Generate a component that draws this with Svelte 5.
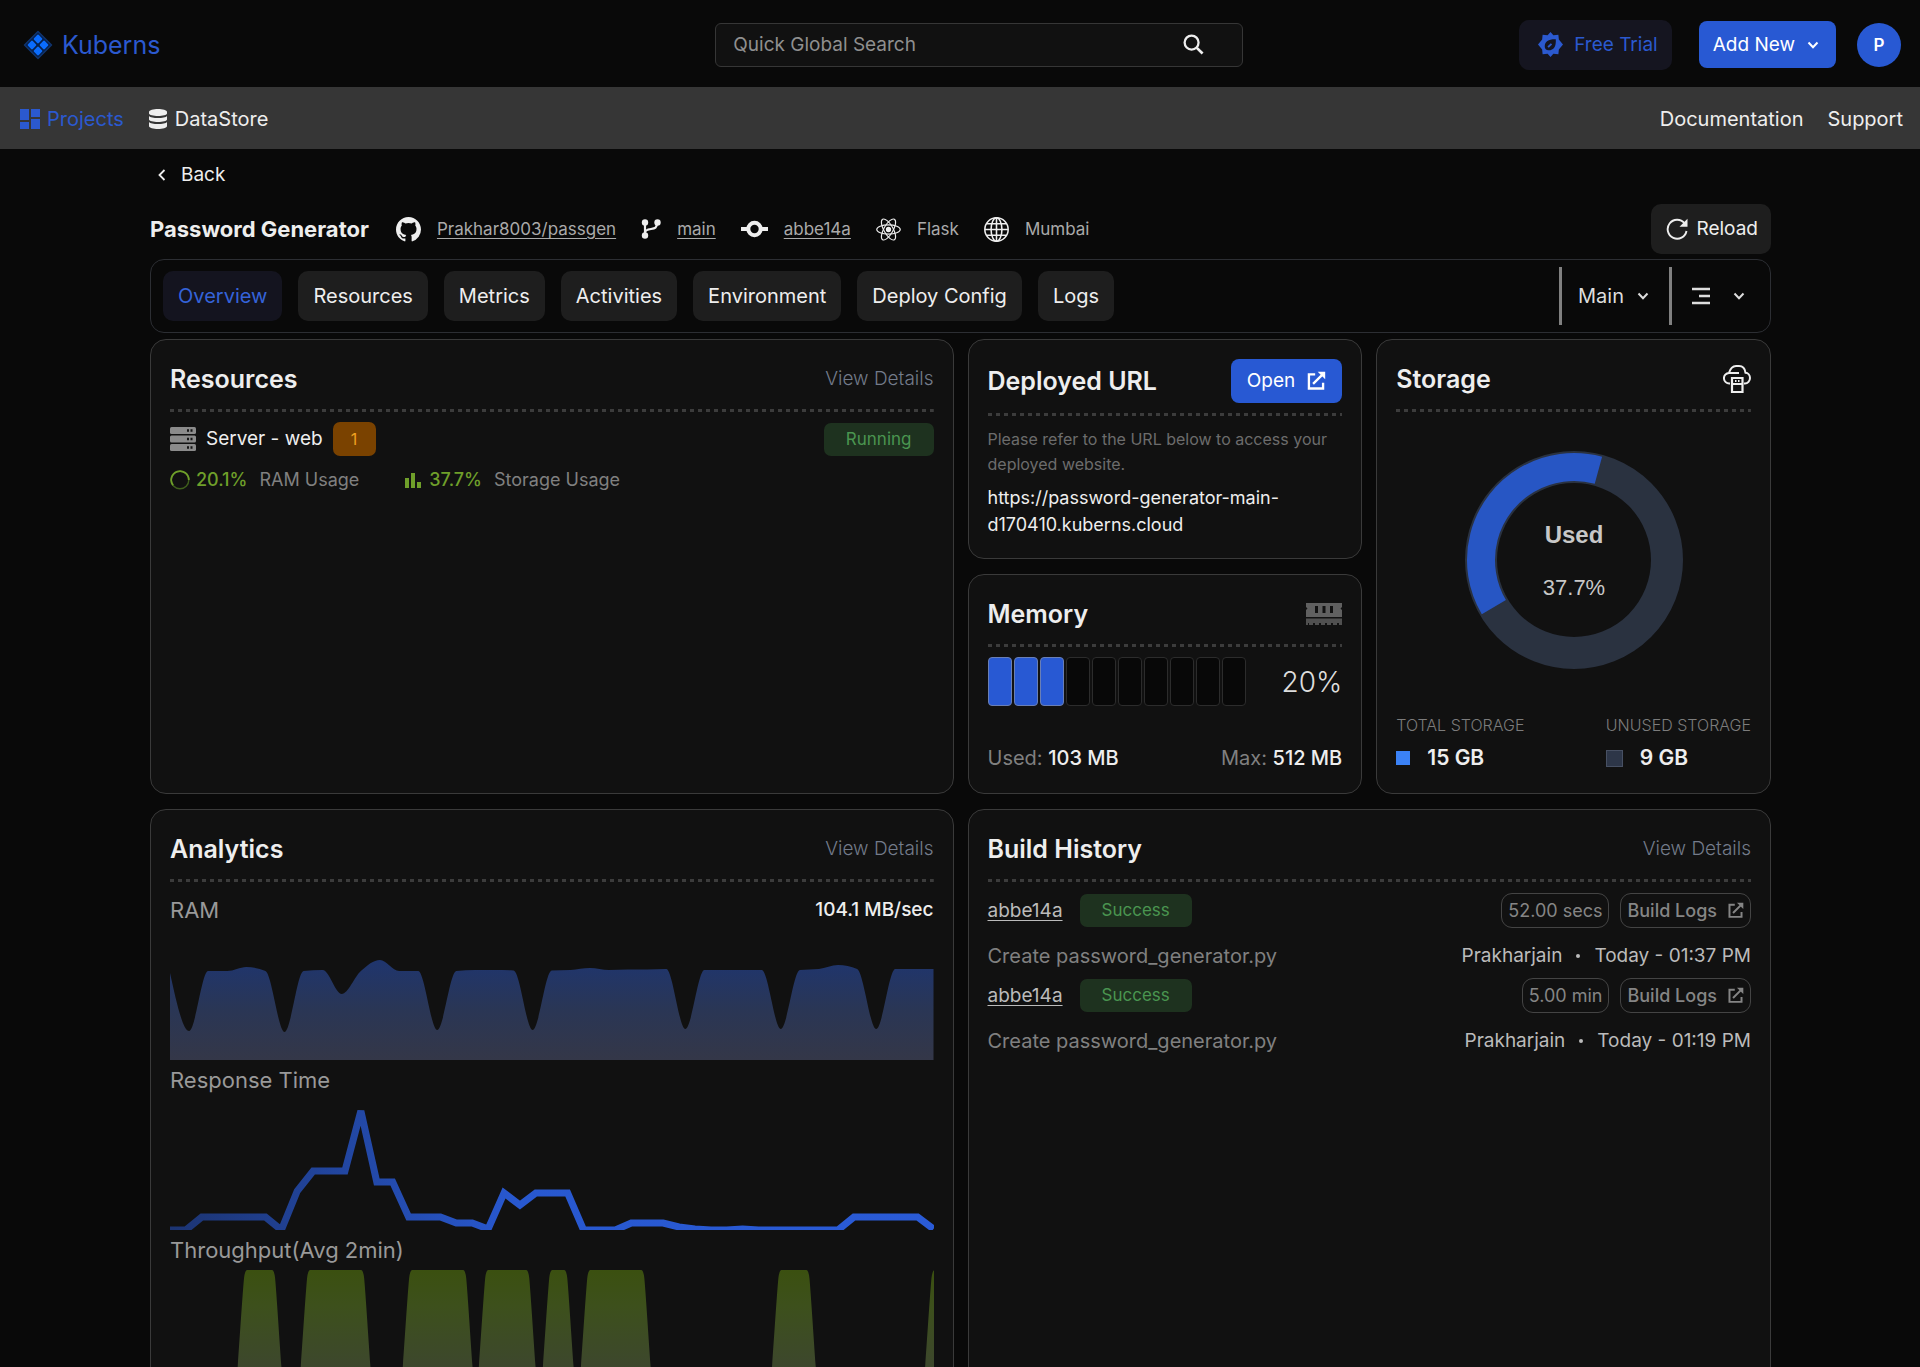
<script lang="ts">
	type Build = { commit: string; duration: string; message: string; author: string; date: string };

	const tabs = ['Overview', 'Resources', 'Metrics', 'Activities', 'Environment', 'Deploy Config', 'Logs'];
	let activeTab = 'Overview';
	let search = '';

	const builds: Build[] = [
		{ commit: 'abbe14a', duration: '52.00 secs', message: 'Create password_generator.py', author: 'Prakharjain', date: 'Today - 01:37 PM' },
		{ commit: 'abbe14a', duration: '5.00 min', message: 'Create password_generator.py', author: 'Prakharjain', date: 'Today - 01:19 PM' }
	];

	const memoryCells = Array.from({ length: 10 }, (_, i) => i < 3);

	const chartWidth = 763;

	// chart values are measured down from the top edge
	const ram = [
		13, 71, 11, 11, 7, 11, 72, 11, 10, 34, 11, 0, 11, 11, 70, 11, 10, 10, 10.5, 70, 10.5, 10, 8, 10, 9.5,
		9.5, 9, 69, 10, 10, 10, 10, 69, 10, 9, 5, 9, 69, 9, 9, 9
	];
	const response = [
		120, 120, 107, 107, 107, 107, 107, 120, 81, 61, 61, 61, 1, 72, 72, 107, 107, 107, 113, 113, 119, 83,
		95, 83, 83, 83, 120, 120, 120, 113, 113, 113, 117, 119, 120, 120, 119, 120, 120, 120, 120, 120, 120,
		107, 107, 107, 107, 107, 119
	];
	// left and right edge of every burst at full height
	const throughput = [
		[76, 103],
		[139, 192],
		[241, 294],
		[317, 357],
		[381, 395],
		[419, 472],
		[610, 637],
		[763, 790]
	];

	function smoothLine(values: number[]): string {
		const step = chartWidth / (values.length - 1);
		const slopes = values.map((v, i) => {
			if (i === 0 || i === values.length - 1) return 0;
			const before = (v - values[i - 1]) / step;
			const after = (values[i + 1] - v) / step;
			if (before * after <= 0) return 0;
			return Math.sign(before) * Math.min(Math.abs(before), Math.abs(after), Math.abs(before + after) / 4) * 2;
		});
		slopes[0] = (1.5 * (values[1] - values[0])) / step;

		let d = `M0 ${values[0]}`;
		for (let i = 1; i < values.length; i++) {
			const x0 = (i - 1) * step;
			const x1 = i * step;
			const third = step / 3;
			d += ` C${x0 + third} ${values[i - 1] + slopes[i - 1] * third} ${x1 - third} ${values[i] - slopes[i] * third} ${x1} ${values[i]}`;
		}
		return d;
	}

	function straightLine(values: number[]): string {
		const step = chartWidth / (values.length - 1);
		return values.map((v, i) => `${i * step},${v}`).join(' ');
	}

	function burst([left, right]: number[]): string {
		return `M${left - 10} 120 C${left - 7} 80 ${left - 4} 30 ${left - 2} 8 Q${left - 1} 0 ${left + 1} 0 H${right - 1} Q${right + 1} 0 ${right + 2} 8 C${right + 4} 30 ${right + 7} 80 ${right + 10} 120 Z`;
	}

	const ramArea = `${smoothLine(ram)} V100 H0 Z`;
</script>

{#snippet chevron()}
	<svg class="chevron" viewBox="0 0 12 12" aria-hidden="true">
		<path d="M1.500 3.500 6 8.200l4.500-4.700" fill="none" stroke="currentColor" stroke-width="2" />
	</svg>
{/snippet}

{#snippet external()}
	<svg class="external" viewBox="0 0 24 24" aria-hidden="true">
		<path d="M11 4H3.500v17h17v-7M8.500 15.500 20 4" fill="none" stroke="currentColor" stroke-width="2.800" />
		<path d="M14 1h9v9l-3-3-3-3Z" fill="currentColor" />
	</svg>
{/snippet}

<div class="app">
	<header class="topbar">
		<a class="brand" href="/">
			<svg viewBox="0 0 30 30" aria-hidden="true">
				<path d="M15 1.500 28.500 15 15 28.500 1.500 15Z" fill="#06204d" stroke="#10346e" stroke-width="1.500" stroke-linejoin="round" />
				<g fill="#0a6cff">
					<rect x="-3.400" y="-3.400" width="6.800" height="6.800" rx="1.200" transform="translate(15 9) rotate(45)" />
					<rect x="-3.400" y="-3.400" width="6.800" height="6.800" rx="1.200" transform="translate(9 15) rotate(45)" />
					<rect x="-3.400" y="-3.400" width="6.800" height="6.800" rx="1.200" transform="translate(21 15) rotate(45)" />
					<rect x="-3.400" y="-3.400" width="6.800" height="6.800" rx="1.200" transform="translate(15 21) rotate(45)" />
				</g>
			</svg>
			Kuberns
		</a>

		<form class="search" role="search">
			<input type="search" aria-label="Search" placeholder="Quick Global Search" bind:value={search} />
			<button type="submit" aria-label="Search">
				<svg viewBox="0 0 22 22" aria-hidden="true">
					<circle cx="9" cy="9" r="7.300" fill="none" stroke="currentColor" stroke-width="2.400" />
					<path d="m14.500 14.500 6 6" stroke="currentColor" stroke-width="2.800" />
				</svg>
			</button>
		</form>

		<div class="account">
			<button class="trial">
				<svg viewBox="0 0 26 26" aria-hidden="true">
					<path
						fill="currentColor"
						fill-rule="evenodd"
						d="M13 0l3 3.300 5.200-.5.500 5L26 13l-4.300 5.200-.5 5-5.200-.5L13 26l-3-3.300-5.200.5-.5-5L0 13l4.300-5.200.5-5 5.200.5ZM18.500 7.500c-7-.3-11.500 2-11.500 7.500 0 2.500 1.500 4 4 4 5.500 0 8-4 7.500-11.500Z"
					/>
					<path d="M10.500 15.800 14 12.300" stroke="currentColor" stroke-width="2" />
				</svg>
				Free Trial
			</button>
			<button class="add">Add New {@render chevron()}</button>
			<button class="avatar" aria-label="Account">P</button>
		</div>
	</header>

	<nav class="subnav">
		<a class="current" href="/projects">
			<svg viewBox="0 0 20 20" fill="currentColor" aria-hidden="true">
				<path d="M0 0h9v11H0zM11 0h9v8h-9zM0 13h9v7H0zM11 10h9v10h-9z" />
			</svg>
			Projects
		</a>
		<a href="/datastore">
			<svg viewBox="0 0 18 20" fill="currentColor" aria-hidden="true">
				<path d="M0 3c0-4 18-4 18 0v1.500c0 3.300-18 3.300-18 0Z" />
				<path d="M0 7c2 2.800 16 2.800 18 0v3.500c0 3.300-18 3.300-18 0Z" />
				<path d="M0 13c2 2.800 16 2.800 18 0v4c0 4-18 4-18 0Z" />
			</svg>
			DataStore
		</a>
		<a class="push" href="/docs">Documentation</a>
		<a href="/support">Support</a>
	</nav>

	<main>
		<a class="back" href="/projects">
			<svg viewBox="0 0 12 12" aria-hidden="true">
				<path d="M8.500 1 3.500 6l5 5" fill="none" stroke="currentColor" stroke-width="1.800" />
			</svg>
			Back
		</a>

		<div class="project">
			<h1>Password Generator</h1>
			<ul>
				<li>
					<svg viewBox="0 0 16 16" fill="currentColor" aria-hidden="true">
						<path d="M8 0C3.580 0 0 3.580 0 8c0 3.540 2.290 6.530 5.470 7.590.4.070.55-.17.55-.38 0-.19-.010-.82-.010-1.490-2.010.37-2.530-.49-2.690-.94-.090-.23-.48-.94-.82-1.130-.28-.15-.68-.52-.010-.53.63-.010 1.080.58 1.230.82.72 1.210 1.870.87 2.330.66.070-.52.28-.87.51-1.070-1.780-.2-3.640-.89-3.640-3.950 0-.87.31-1.590.82-2.150-.080-.2-.36-1.020.080-2.120 0 0 .67-.21 2.200.82a7.640 7.640 0 0 1 4 0c1.530-1.040 2.200-.82 2.200-.82.44 1.100.16 1.920.080 2.120.51.56.82 1.270.82 2.150 0 3.070-1.870 3.750-3.650 3.950.29.25.54.73.54 1.480 0 1.070-.010 1.930-.010 2.200 0 .21.15.46.55.38A8.010 8.010 0 0 0 16 8c0-4.420-3.580-8-8-8Z" />
					</svg>
					<a href="/repo">Prakhar8003/passgen</a>
				</li>
				<li>
					<svg class="branch" viewBox="0 0 20 20" aria-hidden="true">
						<path d="M4 4v12M16 4c0 5-2 5.500-6 6-3.500.4-6 1-6 4" fill="none" stroke="currentColor" stroke-width="2.200" />
						<g fill="currentColor">
							<circle cx="4" cy="3.500" r="3.200" />
							<circle cx="4" cy="16.500" r="3.200" />
							<circle cx="16.500" cy="3.500" r="3.200" />
						</g>
					</svg>
					<a href="/branch">main</a>
				</li>
				<li>
					<svg class="commit" viewBox="0 0 27 24" fill="none" stroke="currentColor" stroke-width="4" aria-hidden="true">
						<circle cx="13.500" cy="12" r="6.200" />
						<path d="M0 12h7.500M19.500 12H27" />
					</svg>
					<a href="/commit">abbe14a</a>
				</li>
				<li>
					<svg viewBox="0 0 24 24" fill="none" stroke="currentColor" stroke-width="1.100" aria-hidden="true">
						<ellipse cx="12" cy="12" rx="11.300" ry="4.400" />
						<ellipse cx="12" cy="12" rx="11.300" ry="4.400" transform="rotate(60 12 12)" />
						<ellipse cx="12" cy="12" rx="11.300" ry="4.400" transform="rotate(120 12 12)" />
						<circle cx="12" cy="12" r="2" fill="currentColor" />
					</svg>
					<span>Flask</span>
				</li>
				<li>
					<svg viewBox="0 0 24 24" fill="none" stroke="currentColor" stroke-width="1.500" aria-hidden="true">
						<circle cx="12" cy="12" r="11.200" />
						<ellipse cx="12" cy="12" rx="5.200" ry="11.200" />
						<path d="M12 1v22M1 12h22M2.500 6.500h19M2.500 17.500h19" />
					</svg>
					<span>Mumbai</span>
				</li>
			</ul>
			<button class="reload">
				<svg viewBox="0 0 22 22" aria-hidden="true">
					<path d="M18.500 5.200A9.500 9.500 0 1 0 20.500 13" fill="none" stroke="currentColor" stroke-width="1.900" />
					<path d="M21.500.8v8h-8Z" fill="currentColor" />
				</svg>
				Reload
			</button>
		</div>

		<div class="tabs">
			{#each tabs as tab}
				<button class:active={tab === activeTab} on:click={() => (activeTab = tab)}>{tab}</button>
			{/each}
			<div class="env">
				<select aria-label="Environment">
					<option>Main</option>
				</select>
				{@render chevron()}
			</div>
			<button class="more" aria-label="More options">
				<svg viewBox="0 0 20 18" aria-hidden="true">
					<path d="M1 2h18M8 9h11M1 16h18" stroke="currentColor" stroke-width="2.600" />
				</svg>
				{@render chevron()}
			</button>
		</div>

		<div class="grid">
			<section class="card wide tall">
				<div class="card-head">
					<h2>Resources</h2>
					<a href="/resources">View Details</a>
				</div>
				<div class="server">
					<svg viewBox="0 0 26 24" aria-hidden="true">
						<g fill="#8b8b8b">
							<rect width="26" height="7" rx="1.500" />
							<rect y="8.500" width="26" height="7" rx="1.500" />
							<rect y="17" width="26" height="7" rx="1.500" />
						</g>
						<path d="M17 3.500h2m1.500 0h2M17 12h2m1.500 0h2M17 20.500h2m1.500 0h2" stroke="#151515" stroke-width="2.400" />
					</svg>
					<span>Server - web</span>
					<span class="count">1</span>
					<span class="status">Running</span>
				</div>
				<div class="usage">
					<svg viewBox="0 0 20 20" aria-hidden="true">
						<circle cx="10" cy="10" r="8.800" fill="none" stroke="#3f5f1c" stroke-width="1.400" />
						<path d="M3 15.300A8.800 8.800 0 1 1 18.800 10" fill="none" stroke="#6f9f2a" stroke-width="1.800" />
					</svg>
					<strong>20.1%</strong>
					<span class="first">RAM Usage</span>
					<svg viewBox="0 0 20 20" fill="#6f9f2a" aria-hidden="true">
						<path d="M2 8h4v10H2zM8 3h4v15H8zM14 12h4v6h-4z" />
					</svg>
					<strong>37.7%</strong>
					<span>Storage Usage</span>
				</div>
			</section>

			<section class="card">
				<div class="card-head">
					<h2>Deployed URL</h2>
					<button class="open">Open {@render external()}</button>
				</div>
				<p class="hint">Please refer to the URL below to access your deployed website.</p>
				<p class="url">https://password-generator-main-d170410.kuberns.cloud</p>
			</section>

			<section class="card tall">
				<div class="card-head">
					<h2>Storage</h2>
					<svg class="cloud" viewBox="0 0 28 28" fill="none" stroke="#eee" stroke-width="2" aria-hidden="true">
						<path d="M7 18.500H6.500a5.300 5.300 0 0 1-.5-10.600C7.500 3 10 1 13 1h3c3.500 0 6 2.700 6.500 6.800 2.500.2 4.500 2.500 4.500 5.200 0 3-2.300 5.500-5 5.500h-1M6 8h10" stroke-linejoin="round" />
						<path d="M9 13h10.500v14H9ZM9 19h10.500" stroke-width="2.200" />
						<path d="M12 16h1.500M15 16h1.500" />
					</svg>
				</div>
				<svg class="donut" viewBox="0 0 218 218" role="img" aria-label="Used 37.7%">
					<circle cx="109" cy="109" r="93" fill="none" stroke="#2a3240" stroke-width="32" />
					<circle
						cx="109"
						cy="109"
						r="93"
						fill="none"
						stroke="#2756c4"
						stroke-width="28"
						pathLength="100"
						stroke-dasharray="37.700 62.300"
						transform="rotate(149.500 109 109)"
					/>
					<text class="donut-title" x="109" y="92">Used</text>
					<text class="donut-value" x="109" y="144">37.7%</text>
				</svg>
				<dl class="legend">
					<div>
						<dt>TOTAL STORAGE</dt>
						<dd class="total">15 GB</dd>
					</div>
					<div>
						<dt>UNUSED STORAGE</dt>
						<dd class="unused">9 GB</dd>
					</div>
				</dl>
			</section>

			<section class="card">
				<div class="card-head">
					<h2>Memory</h2>
					<svg class="stick" viewBox="0 0 36 22" aria-hidden="true">
						<path fill="#606060" fill-rule="evenodd" d="M0 0h36v4l-1.500 1.500L36 7v7H0V7l1.500-1.500L0 4ZM9 3v7h3V3ZM16.500 3v7h3V3ZM24 3v7h3V3Z" />
						<path fill="#505050" d="M0 15.500h36V22h-3v-2h-2v2h-4v-2h-2v2h-4v-2h-2v2h-4v-2h-2v2H9v-2H7v2H3v-2H2v2H0Z" />
					</svg>
				</div>
				<div class="meter">
					<div class="cells">
						{#each memoryCells as filled}
							<span class:filled></span>
						{/each}
					</div>
					<strong>20%</strong>
				</div>
				<div class="totals">
					<span>Used: <b>103 MB</b></span>
					<span>Max: <b>512 MB</b></span>
				</div>
			</section>

			<section class="card wide">
				<div class="card-head">
					<h2>Analytics</h2>
					<a href="/analytics">View Details</a>
				</div>
				<div class="chart-head">
					<h3>RAM</h3>
					<b>104.1 MB/sec</b>
				</div>
				<svg class="chart ram" viewBox="0 0 763 100" preserveAspectRatio="none" aria-hidden="true">
					<defs>
						<linearGradient id="ram-fill" x1="0" y1="0" x2="0" y2="1">
							<stop offset="0" stop-color="#1f356e" />
							<stop offset="0.500" stop-color="#2a3655" />
							<stop offset="1" stop-color="#343748" />
						</linearGradient>
					</defs>
					<path d={ramArea} fill="url(#ram-fill)" />
				</svg>
				<div class="chart-head">
					<h3>Response Time</h3>
				</div>
				<svg class="chart response" viewBox="0 0 763 120" preserveAspectRatio="none" aria-hidden="true">
					<defs>
						<linearGradient id="response-line" x1="0" y1="0" x2="763" y2="0" gradientUnits="userSpaceOnUse">
							<stop offset="0" stop-color="#1c3472" />
							<stop offset="0.450" stop-color="#2858cf" />
							<stop offset="1" stop-color="#2a5bd7" />
						</linearGradient>
					</defs>
					<polyline points={straightLine(response)} fill="none" stroke="url(#response-line)" stroke-width="7" />
				</svg>
				<div class="chart-head">
					<h3>Throughput(Avg 2min)</h3>
				</div>
				<svg class="chart" viewBox="0 0 763 120" preserveAspectRatio="none" aria-hidden="true">
					<defs>
						<linearGradient id="throughput-fill" x1="0" y1="0" x2="0" y2="120" gradientUnits="userSpaceOnUse">
							<stop offset="0" stop-color="#3b5010" />
							<stop offset="0.300" stop-color="#3d501c" />
							<stop offset="1" stop-color="#3d4433" />
						</linearGradient>
					</defs>
					{#each throughput as edges}
						<path d={burst(edges)} fill="url(#throughput-fill)" />
					{/each}
				</svg>
			</section>

			<section class="card wide">
				<div class="card-head">
					<h2>Build History</h2>
					<a href="/builds">View Details</a>
				</div>
				{#each builds as build}
					<div class="build">
						<a class="hash" href="/commit">{build.commit}</a>
						<span class="status">Success</span>
						<span class="pill push">{build.duration}</span>
						<button class="pill logs">Build Logs {@render external()}</button>
					</div>
					<div class="build-info">
						<span class="message">{build.message}</span>
						<span class="who">{build.author}<i></i>{build.date}</span>
					</div>
				{/each}
			</section>
		</div>
	</main>
</div>

<style>
	:global(body) {
		background: #090909;
	}

	.app {
		display: flex;
		flex-direction: column;
		height: 100vh;
		color: #eee;
		font-family: Inter, 'Noto Sans', sans-serif;
		font-size: 19px;
		line-height: 30px;
	}

	h1,
	h2,
	h3,
	p,
	ul,
	dl,
	dd {
		margin: 0;
		padding: 0;
	}

	a {
		color: inherit;
		text-decoration: none;
	}

	button,
	input,
	select {
		margin: 0;
		padding: 0;
		border: 0;
		background: none;
		color: inherit;
		font: inherit;
	}

	button {
		display: flex;
		align-items: center;
		cursor: pointer;
	}

	svg {
		display: block;
		flex: none;
	}

	.chevron {
		width: 12px;
		height: 12px;
	}

	.push {
		margin-left: auto;
	}

	.topbar {
		flex: none;
		display: grid;
		grid-template-columns: 20fr 528px 19fr;
		align-items: center;
		height: 87px;
		padding: 2px 19px 0 23px;
		box-sizing: border-box;
	}

	.brand {
		display: flex;
		align-items: center;
		gap: 9px;
		color: #2b59cf;
		font-size: 25px;
	}

	.brand svg {
		width: 30px;
		height: 30px;
	}

	.search {
		display: flex;
		align-items: center;
		height: 44px;
		padding: 0 38px 0 17px;
		box-sizing: border-box;
		border: 1px solid #363636;
		border-radius: 6px;
		background: #111;
	}

	.search input {
		flex: 1;
		min-width: 0;
		outline: none;
	}

	.search input::placeholder {
		color: #8f8f8f;
		opacity: 1;
	}

	.search svg {
		width: 21px;
		height: 21px;
	}

	.account {
		display: flex;
		justify-content: flex-end;
		align-items: center;
	}

	.trial {
		gap: 11px;
		height: 50px;
		padding: 0 14px 0 19px;
		border-radius: 10px;
		background: #151520;
		color: #2b59cf;
	}

	.trial svg {
		width: 25px;
		height: 25px;
	}

	.add {
		gap: 12px;
		height: 47px;
		margin: 0 21px 0 27px;
		padding: 0 17px 0 14px;
		border-radius: 8px;
		background: #2859d3;
		color: #fff;
	}

	.avatar {
		justify-content: center;
		width: 44px;
		height: 44px;
		border-radius: 50%;
		background: #2859d3;
		color: #fff;
		font-size: 17px;
		font-weight: 600;
	}

	.subnav {
		flex: none;
		display: flex;
		align-items: center;
		gap: 24px;
		height: 62px;
		padding: 2px 17px 0 20px;
		box-sizing: border-box;
		background: #363636;
		font-size: 20px;
	}

	.subnav a {
		display: flex;
		align-items: center;
		gap: 7px;
	}

	.subnav .current {
		color: #2b59cf;
	}

	.subnav svg {
		width: 20px;
		height: 20px;
	}

	main {
		flex: 1;
		min-height: 0;
		overflow-y: auto;
		scrollbar-width: none;
		padding: 11px 149px 20px 150px;
	}

	.back {
		display: inline-flex;
		align-items: center;
		gap: 13px;
		padding-left: 6px;
	}

	.back svg {
		width: 12px;
		height: 12px;
	}

	.project {
		display: flex;
		align-items: center;
		height: 50px;
		margin-top: 14px;
	}

	h1 {
		font-size: 22px;
		font-weight: 700;
	}

	.project ul {
		display: flex;
		align-items: center;
		gap: 25px;
		padding-left: 27px;
		list-style: none;
		color: #aaa;
		font-size: 17px;
	}

	.project li {
		display: flex;
		align-items: center;
		gap: 16px;
	}

	.project li a {
		text-decoration: underline;
		text-underline-offset: 3px;
	}

	.project li svg {
		width: 25px;
		height: 25px;
		color: #eee;
	}

	.project li .branch {
		width: 20px;
		height: 20px;
	}

	.project li .commit {
		width: 27px;
		height: 24px;
	}

	.reload {
		gap: 8px;
		height: 50px;
		margin-left: auto;
		padding: 0 13px 0 15px;
		border-radius: 10px;
		background: #1e1e1e;
	}

	.reload svg {
		width: 22px;
		height: 22px;
	}

	.tabs {
		display: flex;
		align-items: center;
		gap: 16px;
		height: 74px;
		margin-top: 5px;
		padding: 0 10px 0 12px;
		box-sizing: border-box;
		border: 1px solid #2c2e33;
		border-radius: 14px;
		font-size: 20px;
	}

	.tabs button {
		height: 50px;
		padding: 0 15px;
		border-radius: 10px;
		background: #1e1e1e;
		white-space: nowrap;
	}

	.tabs .active {
		background: #14141f;
		color: #3563d8;
	}

	.env {
		position: relative;
		display: flex;
		align-items: center;
		height: 58px;
		margin-left: auto;
		padding: 0 20px 0 16px;
		border: solid #808080;
		border-width: 0 3px;
		color: #ddd;
	}

	.env select {
		appearance: none;
		padding-right: 25px;
		line-height: 30px;
	}

	.env .chevron {
		position: absolute;
		right: 20px;
		pointer-events: none;
	}

	.tabs .more {
		gap: 22px;
		margin-left: -12px;
		background: none;
		color: #ddd;
	}

	.more svg:first-child {
		width: 20px;
		height: 18px;
	}

	.grid {
		display: grid;
		grid-template-columns: repeat(4, 1fr);
		gap: 15px 14px;
		margin-top: 6px;
	}

	.card {
		min-width: 0;
		padding: 19px 19px 20px;
		border: 1px solid #3a3a3a;
		border-radius: 16px;
		background: #111;
	}

	.wide {
		grid-column: span 2;
	}

	.tall {
		grid-row: span 2;
	}

	.card-head {
		display: flex;
		justify-content: space-between;
		align-items: center;
		min-height: 40px;
		padding-bottom: 13px;
		background: repeating-linear-gradient(90deg, #3c3c3c 0 4px, transparent 4px 8px) bottom / 100% 3px no-repeat;
	}

	h2 {
		font-size: 25px;
		font-weight: 600;
	}

	.card-head a {
		color: #737b8a;
		font-weight: 300;
	}

	.server {
		display: flex;
		align-items: center;
		gap: 10px;
		padding-top: 10px;
	}

	.server svg {
		width: 26px;
		height: 24px;
	}

	.count {
		width: 43px;
		border-radius: 7px;
		background: #7a4200;
		color: #f0a020;
		font-size: 16px;
		line-height: 34px;
		text-align: center;
	}

	.status {
		padding: 0 22px;
		border-radius: 7px;
		background: #1e321f;
		color: #4a9550;
		font-size: 17px;
		line-height: 33px;
	}

	.server .status {
		margin-left: auto;
	}

	.usage {
		display: flex;
		align-items: center;
		margin-top: 9px;
		color: #808080;
		font-size: 18px;
	}

	.usage svg {
		width: 20px;
		height: 20px;
	}

	.usage strong {
		margin: 0 12px 0 6px;
		color: #6f9f2a;
		font-weight: 500;
	}

	.usage .first {
		margin-right: 44px;
	}

	.open {
		gap: 11px;
		height: 44px;
		padding: 0 16px;
		border-radius: 8px;
		background: #2859d3;
		color: #fff;
	}

	.external {
		width: 20px;
		height: 20px;
	}

	.hint {
		margin-top: 11px;
		color: #6c6c6c;
		font-size: 16px;
		line-height: 25px;
	}

	.url {
		margin-top: 7px;
		font-size: 18px;
		line-height: 27px;
	}

	.stick {
		width: 36px;
		height: 22px;
	}

	.meter {
		display: flex;
		justify-content: space-between;
		align-items: center;
		padding-top: 10px;
	}

	.meter strong {
		color: #ddd;
		font-size: 28px;
		font-weight: 300;
	}

	.cells {
		display: flex;
		gap: 2px;
	}

	.cells span {
		width: 24px;
		height: 49px;
		box-sizing: border-box;
		border: 1px solid #2c2c2c;
		border-radius: 4px;
		background: #080808;
	}

	.cells .filled {
		border-color: #6a7fb5;
		background: #2859d3;
	}

	.totals {
		display: flex;
		justify-content: space-between;
		margin-top: 37px;
		color: #808080;
		font-size: 20px;
	}

	.totals b,
	.chart-head b {
		color: #eee;
		font-weight: 500;
	}

	.cloud {
		width: 28px;
		height: 28px;
	}

	.donut {
		width: 218px;
		height: 218px;
		margin: 39px auto 44px;
	}

	.donut text {
		fill: #c8c8c8;
		font-family: 'Liberation Sans', sans-serif;
		text-anchor: middle;
	}

	.donut-title {
		font-size: 24px;
		font-weight: 700;
	}

	.donut-value {
		font-size: 22px;
	}

	.legend {
		display: flex;
		justify-content: space-between;
	}

	.legend dt {
		color: #7c7c7c;
		font-size: 16px;
		font-weight: 300;
		line-height: 24px;
	}

	.legend dd {
		display: flex;
		align-items: center;
		gap: 17px;
		margin-top: 6px;
		font-size: 21px;
		font-weight: 600;
	}

	.legend dd::before {
		content: '';
		width: 14px;
		height: 14px;
		background: #3b82f6;
	}

	.legend .unused::before {
		width: 15px;
		height: 15px;
		border: 1px solid #475063;
		background: #2d3648;
	}

	.chart-head {
		display: flex;
		justify-content: space-between;
		align-items: center;
		padding: 5px 0;
		color: #999;
	}

	.card-head + .chart-head {
		padding: 13px 0 35px;
	}

	h3 {
		font-size: 22px;
		font-weight: 400;
	}

	.chart {
		width: 100%;
		height: 120px;
	}

	.chart.ram {
		height: 100px;
	}

	.chart.response {
		margin-top: 10px;
	}

	.build {
		display: flex;
		align-items: center;
		gap: 11px;
		padding-top: 11px;
	}

	.hash {
		margin-right: 6px;
		color: #bbb;
		text-decoration: underline;
		text-underline-offset: 3px;
	}

	.pill {
		height: 35px;
		padding: 0 6px;
		box-sizing: border-box;
		border: 1px solid #444;
		border-radius: 11px;
		color: #858585;
		font-size: 18px;
		line-height: 33px;
	}

	.logs {
		gap: 10px;
		font-weight: 500;
	}

	.logs :global(.external) {
		width: 17px;
		height: 17px;
	}

	.build-info {
		display: flex;
		justify-content: space-between;
		margin-top: 13px;
		margin-bottom: -4px;
		color: #808080;
	}

	.message {
		font-size: 20px;
	}

	.who {
		display: flex;
		align-items: center;
		color: #bbb;
	}

	.who i {
		width: 4px;
		height: 4px;
		margin: 0 14px;
		border-radius: 50%;
		background: currentColor;
	}
</style>
